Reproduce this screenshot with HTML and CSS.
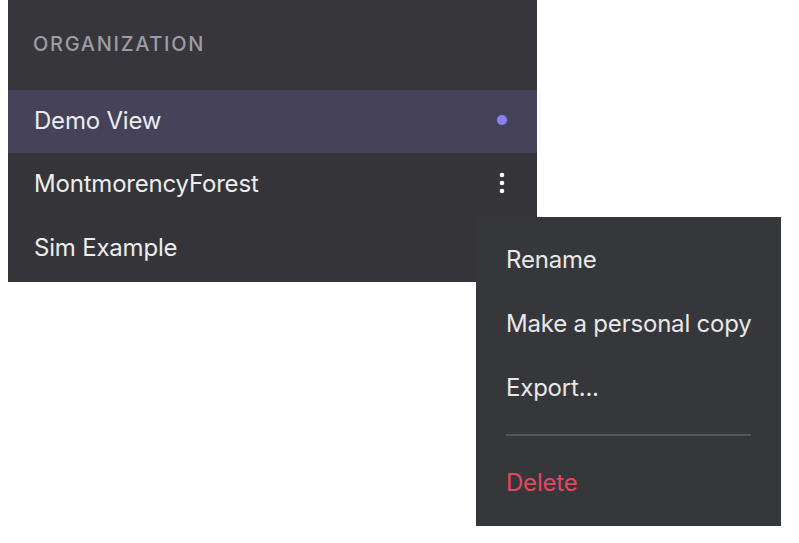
FILE: index.html
```html
<!DOCTYPE html>
<html lang="en">
<head>
  <meta charset="UTF-8">
  <title>Views</title>
  <link rel="stylesheet" href="styles.css">
</head>
<body>
  <div class="stage">
    <!-- Sidebar list of views -->
    <div class="view-panel">
      <div class="panel-header">Organization</div>
      <div class="view-list">
        <div class="view-row active">
          <span class="view-name">Demo View</span>
          <span class="active-dot"></span>
        </div>
        <div class="view-row">
          <span class="view-name">MontmorencyForest</span>
          <span class="kebab">
            <svg width="8" height="24" viewBox="0 0 8 24"><circle cx="4" cy="4" r="2.3" fill="#fff"/><circle cx="4" cy="12" r="2.3" fill="#fff"/><circle cx="4" cy="20" r="2.3" fill="#fff"/></svg>
          </span>
        </div>
        <div class="view-row">
          <span class="view-name">Sim Example</span>
        </div>
      </div>
    </div>
    <!-- Context menu -->
    <div class="context-menu">
      <div class="menu-item">Rename</div>
      <div class="menu-item">Make a personal copy</div>
      <div class="menu-item">Export...</div>
      <div class="menu-divider"></div>
      <div class="menu-item danger">Delete</div>
    </div>
  </div>
</body>
</html>
```

FILE: styles.css
```css
body {
  margin: 0;
  background: #fff;
  font-family: Inter, 'Noto Sans', sans-serif;
  color: #e8e8ea;
}
.stage {
  position: relative;
  width: 799px;
  height: 543px;
}
.view-panel {
  margin-left: 8px;
  width: 529px;
  background: #343439;
}
.panel-header {
  height: 90px;
  box-sizing: border-box;
  padding: 0 0 2px 25px;
  display: flex;
  align-items: center;
  font-size: 20px;
  font-weight: 500;
  letter-spacing: 1.7px;
  text-transform: uppercase;
  color: #9d9da5;
  background: #36363b;
}
.view-list {
  display: flex;
  flex-direction: column;
}
.view-row {
  height: 63px;
  box-sizing: border-box;
  display: flex;
  align-items: center;
  justify-content: space-between;
  padding: 0 29px 3px 26px;
  font-size: 24px;
  letter-spacing: -0.2px;
  color: #ececee;
}
.view-row:last-child {
  height: 66px;
}
.view-row.active {
  background: #45425a;
}
.active-dot {
  width: 10px;
  height: 10px;
  border-radius: 50%;
  background: #8f80f2;
  margin-right: 1px;
}
.kebab {
  display: flex;
  margin-right: 2px;
}
.context-menu {
  position: absolute;
  left: 476px;
  top: 217px;
  width: 305px;
  height: 309px;
  box-sizing: border-box;
  padding: 10px 30px 0 30px;
  background: #36373b;
  display: flex;
  flex-direction: column;
}
.menu-item {
  height: 64px;
  display: flex;
  align-items: center;
  white-space: nowrap;
  font-size: 24px;
  letter-spacing: -0.2px;
  color: #e8e8ea;
}
.menu-divider {
  height: 2px;
  background: #56575d;
  margin: 15px 0 14px 0;
}
.menu-item.danger {
  color: #e8455f;
}
```
